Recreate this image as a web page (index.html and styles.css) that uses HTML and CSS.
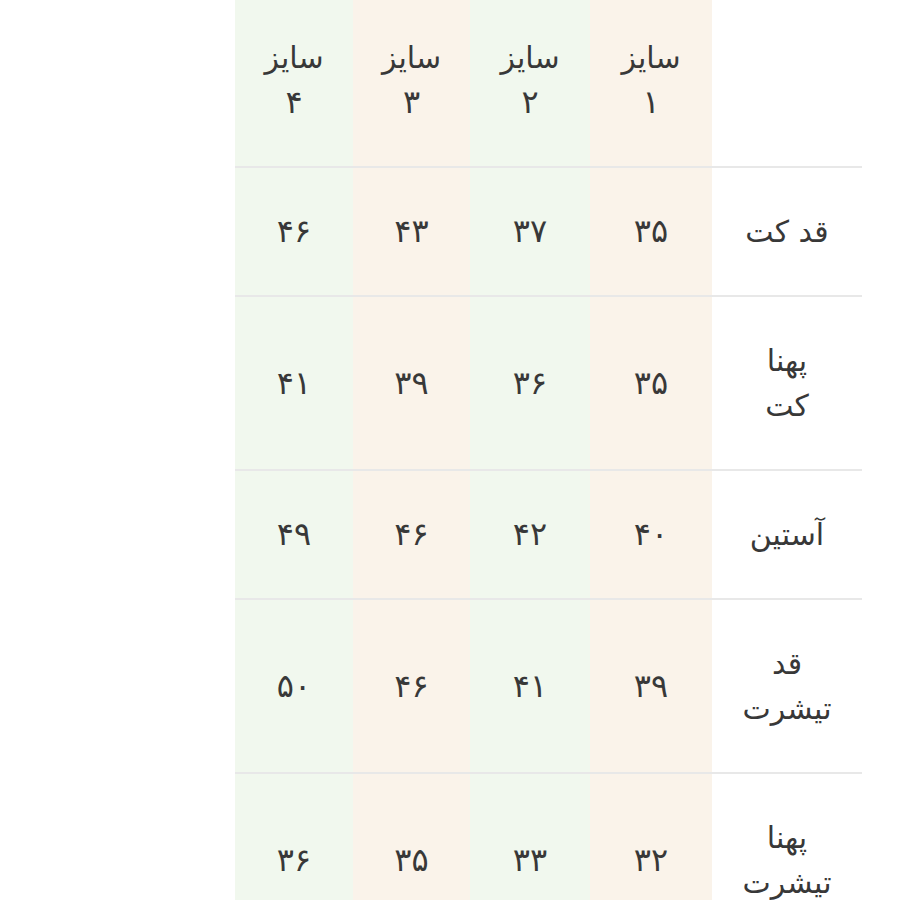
FILE: index.html
```html
<!DOCTYPE html>
<html lang="fa" dir="rtl">
<head>
<meta charset="utf-8">
<link rel="stylesheet" href="styles.css">
</head>
<body>
<div class="wrap">
<table class="sizes">
  <colgroup>
    <col class="c-label">
    <col class="c-a">
    <col class="c-b">
    <col class="c-a2">
    <col class="c-b2">
  </colgroup>
  <thead>
    <tr>
      <th class="label"></th>
      <th class="beige">سایز<br><span class="num">۱</span></th>
      <th class="green">سایز<br><span class="num">۲</span></th>
      <th class="beige">سایز<br><span class="num">۳</span></th>
      <th class="green">سایز<br><span class="num">۴</span></th>
    </tr>
  </thead>
  <tbody>
    <tr>
      <td class="label">قد کت</td>
      <td class="beige num">۳۵</td>
      <td class="green num">۳۷</td>
      <td class="beige num">۴۳</td>
      <td class="green num">۴۶</td>
    </tr>
    <tr>
      <td class="label">پهنا<br>کت</td>
      <td class="beige num">۳۵</td>
      <td class="green num">۳۶</td>
      <td class="beige num">۳۹</td>
      <td class="green num">۴۱</td>
    </tr>
    <tr>
      <td class="label">آستین</td>
      <td class="beige num">۴۰</td>
      <td class="green num">۴۲</td>
      <td class="beige num">۴۶</td>
      <td class="green num">۴۹</td>
    </tr>
    <tr>
      <td class="label">قد<br>تیشرت</td>
      <td class="beige num">۳۹</td>
      <td class="green num">۴۱</td>
      <td class="beige num">۴۶</td>
      <td class="green num">۵۰</td>
    </tr>
    <tr>
      <td class="label">پهنا<br>تیشرت</td>
      <td class="beige num">۳۲</td>
      <td class="green num">۳۳</td>
      <td class="beige num">۳۵</td>
      <td class="green num">۳۶</td>
    </tr>
  </tbody>
</table>
</div>
</body>
</html>
```

FILE: styles.css
```css
html, body {
  margin: 0;
  padding: 0;
  background: #ffffff;
}

body {
  font-family: "DejaVu Sans", "Noto Sans", sans-serif;
  color: #383838;
  overflow: hidden;
}

.wrap {
  display: flex;
  justify-content: flex-start;
  padding-right: 38px;
  margin-top: -6px;
}

.sizes {
  width: 627px;
  border-collapse: collapse;
  table-layout: fixed;
  font-size: 30px;
  line-height: 45px;
}

.c-label { width: 150px; }
.c-a { width: 122px; }
.c-b { width: 120px; }
.c-a2 { width: 117px; }
.c-b2 { width: 118px; }

.sizes th,
.sizes td {
  font-weight: normal;
  text-align: center;
  vertical-align: middle;
  padding: 41px 4px;
  border-bottom: 2px solid #e8e8e8;
}

.num { font-size: 32px; }

.beige { background: #faf3ea; }
.green { background: #f1f8ee; }
.label { background: #ffffff; }
```
